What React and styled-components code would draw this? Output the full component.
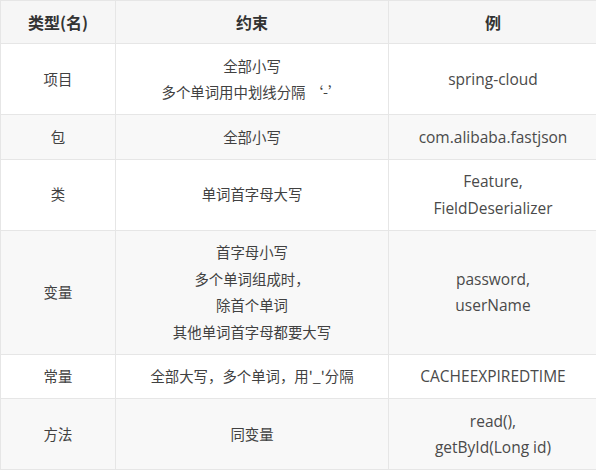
import React from 'react';
import styled, { createGlobalStyle } from 'styled-components';

const GlobalStyle = createGlobalStyle`
    html, body {
        margin: 0;
        padding: 0;
        background: #ffffff;
        overflow: hidden;
    }
`;

const Table = styled.table`
    width: 597px;
    border-collapse: collapse;
    table-layout: fixed;
    color: #414141;
`;

const HeadCell = styled.th`
    height: 42px;
    padding: 0 8px;
    background: #f6f6f6;
    border: 1px solid #e6e6e6;
    font-family: 'Noto Sans CJK SC', sans-serif;
    font-size: 16px;
    font-weight: 700;
    color: #333333;
    text-align: center;
`;

const Row = styled.tr`
    background: ${p => (p.$striped ? '#f8f8f8' : '#ffffff')};
`;

const Cell = styled.td`
    padding: 8.5px 8px;
    border: 1px solid #e6e6e6;
    text-align: center;
    vertical-align: middle;
    line-height: 26.5px;
    font-family: ${p =>
        p.$latin
            ? "'Open Sans', 'Noto Sans CJK SC', sans-serif"
            : "'Noto Sans CJK SC', 'Open Sans', sans-serif"};
    font-size: ${p => (p.$latin ? '15.5px' : '14.4px')};
    color: ${p => (p.$latin ? '#4a4a4a' : '#414141')};
`;

const Line = styled.div`
    white-space: nowrap;
`;

const rows = [
    { name: '项目', rule: ['全部小写', '多个单词用中划线分隔 ‘-’'], example: ['spring-cloud'] },
    { name: '包', rule: ['全部小写'], example: ['com.alibaba.fastjson'] },
    { name: '类', rule: ['单词首字母大写'], example: ['Feature,', 'FieldDeserializer'] },
    {
        name: '变量',
        rule: ['首字母小写', '多个单词组成时，', '除首个单词', '其他单词首字母都要大写'],
        example: ['password,', 'userName'],
    },
    { name: '常量', rule: ['全部大写，多个单词，用\'_\'分隔'], example: ['CACHEEXPIREDTIME'] },
    { name: '方法', rule: ['同变量'], example: ['read(),', 'getById(Long id)'] },
];

const App = () => {
    return (
        <>
            <GlobalStyle />
            <Table>
                <colgroup>
                    <col style={{ width: 115 }} />
                    <col style={{ width: 273 }} />
                    <col style={{ width: 209 }} />
                </colgroup>
                <thead>
                    <tr>
                        <HeadCell>类型(名)</HeadCell>
                        <HeadCell>约束</HeadCell>
                        <HeadCell>例</HeadCell>
                    </tr>
                </thead>
                <tbody>
                    {rows.map((row, i) => (
                        <Row key={row.name} $striped={i % 2 === 1}>
                            <Cell>{row.name}</Cell>
                            <Cell>
                                {row.rule.map(t => (
                                    <Line key={t}>{t}</Line>
                                ))}
                            </Cell>
                            <Cell $latin>
                                {row.example.map(t => (
                                    <Line key={t}>{t}</Line>
                                ))}
                            </Cell>
                        </Row>
                    ))}
                </tbody>
            </Table>
        </>
    );
};

export default App;
